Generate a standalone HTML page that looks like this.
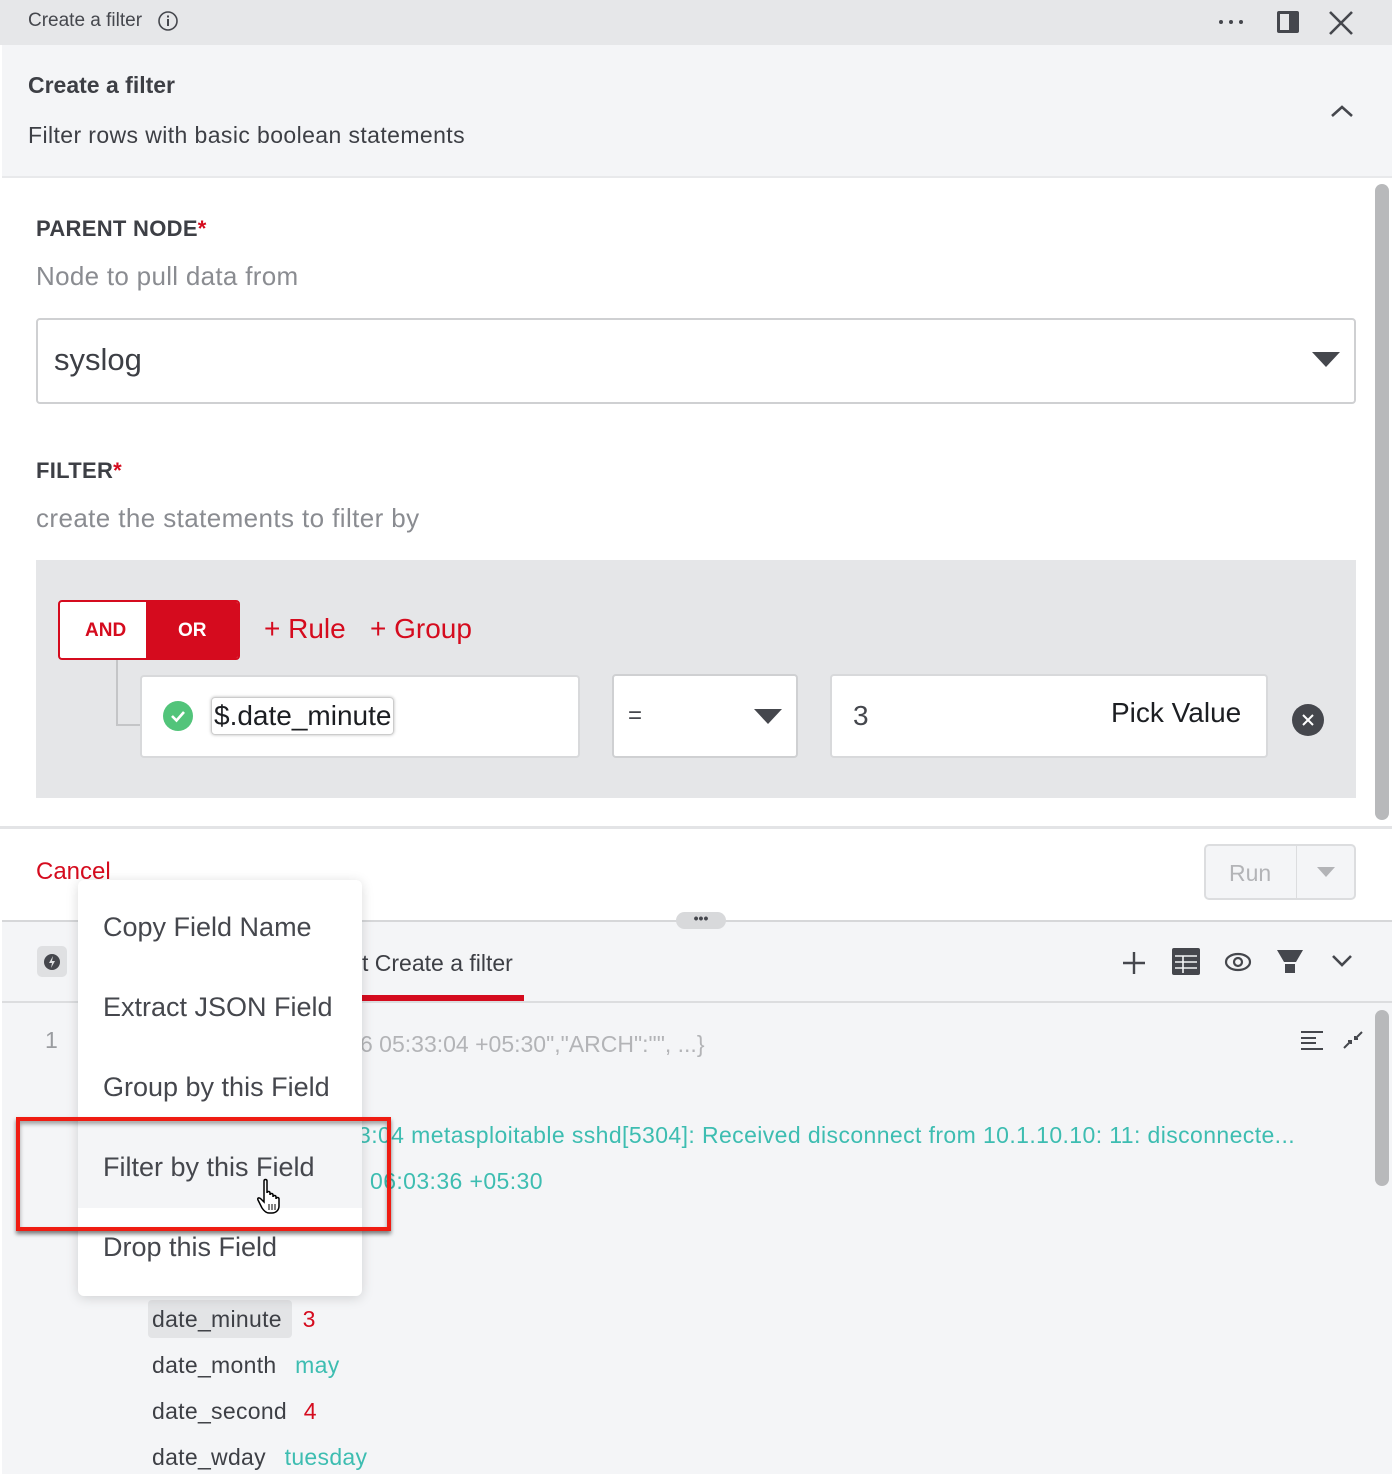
<!DOCTYPE html>
<html><head><meta charset="utf-8"><style>
*{margin:0;padding:0;box-sizing:border-box}
body{width:1392px;height:1474px;overflow:hidden;background:#fff;font-family:"Liberation Sans",sans-serif;color:#3d3f45;position:relative}
.a{position:absolute;white-space:nowrap}
</style></head><body>
<!-- top bar -->
<div class="a" style="left:0;top:0;width:1392px;height:45px;background:#e6e7e9"></div>
<div class="a" style="left:28px;top:10px;font-size:19px;color:#45474d">Create a filter</div>
<svg class="a" style="left:157px;top:10px" width="22" height="22"><circle cx="11" cy="11" r="9" fill="none" stroke="#45474d" stroke-width="1.6"/><rect x="10" y="9" width="2" height="7" fill="#45474d"/><rect x="10" y="5.5" width="2" height="2" fill="#45474d"/></svg>
<svg class="a" style="left:1218px;top:19px" width="28" height="6"><circle cx="3" cy="3" r="2" fill="#45474d"/><circle cx="13" cy="3" r="2" fill="#45474d"/><circle cx="23" cy="3" r="2" fill="#45474d"/></svg>
<svg class="a" style="left:1275px;top:9px" width="26" height="26"><rect x="2" y="2" width="22" height="22" rx="2" fill="#45474d"/><rect x="5" y="5" width="9" height="16" fill="#e6e7e9"/></svg>
<svg class="a" style="left:1328px;top:10px" width="26" height="26"><path d="M2 2L24 24M24 2L2 24" stroke="#45474d" stroke-width="2.6"/></svg>
<!-- header -->
<div class="a" style="left:2px;top:45px;width:1390px;height:133px;background:#f4f5f7;border-bottom:2px solid #e8e9eb"></div>
<div class="a" style="left:28px;top:72px;font-size:23px;font-weight:bold;color:#3d3f45">Create a filter</div>
<div class="a" style="left:28px;top:122px;font-size:23px;color:#3d3f45;letter-spacing:.4px">Filter rows with basic boolean statements</div>
<svg class="a" style="left:1330px;top:103px" width="24" height="16"><path d="M2 13L12 4L22 13" fill="none" stroke="#45474d" stroke-width="2.6"/></svg>
<!-- scrollbar -->
<div class="a" style="left:1375px;top:184px;width:14px;height:636px;border-radius:7px;background:#b8b9bb"></div>
<!-- parent node -->
<div class="a" style="left:36px;top:216px;font-size:22px;font-weight:bold;color:#3d3f45;letter-spacing:.3px">PARENT NODE<span style="color:#d50b1e">*</span></div>
<div class="a" style="left:36px;top:261px;font-size:26px;color:#8a8c91;letter-spacing:.3px">Node to pull data from</div>
<div class="a" style="left:36px;top:318px;width:1320px;height:86px;border:2px solid #cfd0d2;border-radius:4px"></div>
<div class="a" style="left:54px;top:342px;font-size:31px;color:#3d3f45">syslog</div>
<svg class="a" style="left:1311px;top:350px" width="30" height="18"><path d="M1 2H29L15 17Z" fill="#45474d"/></svg>
<!-- filter -->
<div class="a" style="left:36px;top:458px;font-size:22px;font-weight:bold;color:#3d3f45;letter-spacing:.3px">FILTER<span style="color:#d50b1e">*</span></div>
<div class="a" style="left:36px;top:503px;font-size:26px;color:#8a8c91;letter-spacing:.4px">create the statements to filter by</div>
<div class="a" style="left:36px;top:560px;width:1320px;height:238px;background:#e5e6e8"></div>
<div class="a" style="left:58px;top:600px;width:182px;height:60px;border:2px solid #d50b1e;border-radius:4px;background:#fff;overflow:hidden">
 <div class="a" style="left:86px;top:0;width:96px;height:58px;background:#d50b1e"></div>
 <div class="a" style="left:25px;top:18px;font-size:19px;font-weight:bold;color:#d50b1e">AND</div>
 <div class="a" style="left:118px;top:18px;font-size:19px;font-weight:bold;color:#fff">OR</div>
</div>
<div class="a" style="left:264px;top:613px;font-size:28px;color:#d50b1e">+ Rule</div>
<div class="a" style="left:370px;top:613px;font-size:28px;color:#d50b1e">+ Group</div>
<div class="a" style="left:116px;top:660px;width:26px;height:66px;border-left:2px solid #c4c5c7;border-bottom:2px solid #c4c5c7"></div>
<div class="a" style="left:140px;top:675px;width:440px;height:83px;background:#fff;border:2px solid #d8d9db;border-radius:4px"></div>
<svg class="a" style="left:162px;top:700px" width="32" height="32"><circle cx="16" cy="16" r="15" fill="#52c47a"/><path d="M10 16L14.5 20.5L22 12" fill="none" stroke="#fff" stroke-width="2.6"/></svg>
<div class="a" style="left:211px;top:697px;height:38px;padding:0 2px;border:1px solid #ccc;border-radius:4px;box-shadow:0 0 3px #bbb;font-size:28px;color:#1c1e22;line-height:36px">$.date_minute</div>
<div class="a" style="left:612px;top:674px;width:186px;height:84px;background:#fff;border:2px solid #cfd0d2;border-radius:4px"></div>
<div class="a" style="left:628px;top:702px;font-size:24px;color:#45474d">=</div>
<svg class="a" style="left:753px;top:707px" width="30" height="18"><path d="M1 2H29L15 17Z" fill="#45474d"/></svg>
<div class="a" style="left:830px;top:674px;width:438px;height:84px;background:#fff;border:2px solid #d8d9db;border-radius:4px"></div>
<div class="a" style="left:853px;top:700px;font-size:28px;color:#45474d">3</div>
<div class="a" style="left:1111px;top:697px;font-size:28px;color:#1c1e22">Pick Value</div>
<svg class="a" style="left:1291px;top:703px" width="34" height="34"><circle cx="17" cy="17" r="16" fill="#45474d"/><path d="M12 12L22 22M22 12L12 22" stroke="#fff" stroke-width="2"/></svg>
<!-- footer -->
<div class="a" style="left:0;top:826px;width:1392px;height:3px;background:#e3e4e6"></div>
<div class="a" style="left:36px;top:858px;font-size:24px;color:#d50b1e">Cancel</div>
<div class="a" style="left:1204px;top:844px;width:152px;height:56px;border:2px solid #dcdddf;border-radius:5px;background:#f4f5f7"></div>
<div class="a" style="left:1296px;top:846px;width:1px;height:52px;background:#dcdddf"></div>
<div class="a" style="left:1229px;top:860px;font-size:23px;color:#b3b4b7">Run</div>
<svg class="a" style="left:1316px;top:866px" width="20" height="12"><path d="M1 1H19L10 11Z" fill="#b3b4b7"/></svg>
<!-- lower panel -->
<div class="a" style="left:2px;top:920px;width:1390px;height:554px;background:#f4f5f7;border-top:2px solid #d6d7d9"></div>
<div class="a" style="left:676px;top:912px;width:50px;height:17px;border-radius:9px;background:#d8d9db;font-size:14px;line-height:12px;text-align:center;color:#45474d;font-weight:bold">•••</div>
<div class="a" style="left:37px;top:946px;width:30px;height:31px;border-radius:5px;background:#dfe0e2"></div>
<svg class="a" style="left:42px;top:952px" width="20" height="20"><circle cx="10" cy="10" r="8" fill="#45474d"/><path d="M11 4L7 11H10L9 16L13 9H10Z" fill="#dfe0e2"/></svg>
<div class="a" style="left:362px;top:950px;font-size:23px;color:#3d3f45">t Create a filter</div>
<div class="a" style="left:355px;top:995px;width:169px;height:6px;background:#d50b1e"></div>
<div class="a" style="left:2px;top:1001px;width:1390px;height:2px;background:#dcdddf"></div>
<svg class="a" style="left:1121px;top:950px" width="26" height="26"><path d="M13 2V24M2 13H24" stroke="#45474d" stroke-width="2.4"/></svg>
<svg class="a" style="left:1172px;top:948px" width="28" height="28"><rect x="0" y="0" width="28" height="27" rx="2" fill="#45474d"/><path d="M3 8H25M3 14H25M3 20H25M11 8V25" stroke="#f4f5f7" stroke-width="1.6"/></svg>
<svg class="a" style="left:1224px;top:950px" width="28" height="24"><ellipse cx="14" cy="12" rx="12" ry="8" fill="none" stroke="#45474d" stroke-width="2.2"/><circle cx="14" cy="12" r="4" fill="none" stroke="#45474d" stroke-width="2.2"/></svg>
<svg class="a" style="left:1277px;top:949px" width="26" height="26"><path d="M0 1H26L19 13H7Z" fill="#45474d"/><rect x="8" y="15" width="10" height="9" fill="#45474d"/></svg>
<svg class="a" style="left:1331px;top:954px" width="22" height="14"><path d="M2 2L11 11L20 2" fill="none" stroke="#45474d" stroke-width="2.6"/></svg>
<div class="a" style="left:1375px;top:1010px;width:14px;height:176px;border-radius:7px;background:#b8b9bb"></div>
<div class="a" style="left:45px;top:1027px;font-size:23px;color:#9a9ca0">1</div>
<div class="a" style="left:360px;top:1031px;font-size:23px;color:#b3b4b7">6 05:33:04 +05:30","ARCH":"", ...}</div>
<svg class="a" style="left:1300px;top:1030px" width="24" height="20"><path d="M1 2H23M1 8H16M1 13H16M1 19H23" stroke="#45474d" stroke-width="2"/></svg>
<svg class="a" style="left:1342px;top:1030px" width="22" height="20"><path d="M2 18L9 11M6 11H9V14M20 2L13 9M13 6V9H16" fill="none" stroke="#45474d" stroke-width="2"/></svg>
<div class="a" style="left:358px;top:1122px;font-size:23px;color:#3dbdb1;letter-spacing:.4px">3:04 metasploitable sshd[5304]: Received disconnect from 10.1.10.10: 11: disconnecte...</div>
<div class="a" style="left:370px;top:1168px;font-size:23px;color:#3dbdb1;letter-spacing:.4px">06:03:36 +05:30</div>
<div class="a" style="left:148px;top:1300px;width:144px;height:38px;border-radius:4px;background:#e3e4e6"></div>
<div class="a" style="left:152px;top:1306px;font-size:23px;color:#3d3f45;letter-spacing:.3px">date_minute <span style="color:#d50b1e;margin-left:14px">3</span></div>
<div class="a" style="left:152px;top:1352px;font-size:23px;color:#3d3f45;letter-spacing:.3px">date_month <span style="color:#3dbdb1;margin-left:12px">may</span></div>
<div class="a" style="left:152px;top:1398px;font-size:23px;color:#3d3f45;letter-spacing:.3px">date_second <span style="color:#d50b1e;margin-left:10px">4</span></div>
<div class="a" style="left:152px;top:1444px;font-size:23px;color:#3d3f45;letter-spacing:.3px">date_wday <span style="color:#3dbdb1;margin-left:12px">tuesday</span></div>
<!-- context menu -->
<div class="a" style="left:78px;top:880px;width:284px;height:416px;background:#fff;border-radius:6px;box-shadow:0 2px 12px rgba(0,0,0,.15)"></div>
<div class="a" style="left:78px;top:1122px;width:284px;height:86px;background:#f4f5f7"></div>
<div class="a" style="left:103px;top:912px;font-size:27px;color:#45474d">Copy Field Name</div>
<div class="a" style="left:103px;top:992px;font-size:27px;color:#45474d">Extract JSON Field</div>
<div class="a" style="left:103px;top:1072px;font-size:27px;color:#45474d">Group by this Field</div>
<div class="a" style="left:103px;top:1152px;font-size:27px;color:#45474d">Filter by this Field</div>
<div class="a" style="left:103px;top:1232px;font-size:27px;color:#45474d">Drop this Field</div>
<div class="a" style="left:16px;top:1117px;width:375px;height:114px;border:4px solid #ef1c12;box-shadow:0 3px 4px rgba(0,0,0,.5), inset 0 3px 4px rgba(0,0,0,.35)"></div>
<svg class="a" style="left:256px;top:1178px" width="32" height="38"><path d="M8 3C8 1 11 1 11 3V15C11 13 14 13 14 15V17C14 15 17 15 17 17V19C17 17 20 17 20 19V21C20 19 23 19 23 21V28C23 32 20 35 16 35H13C10 35 8 33 6 30L2 22C1 20 3 19 5 21L8 24Z" fill="#fff" stroke="#000" stroke-width="1.5"/><path d="M13 26V32M16 26V32M19 26V32" stroke="#000" stroke-width="1"/></svg>
</body></html>
